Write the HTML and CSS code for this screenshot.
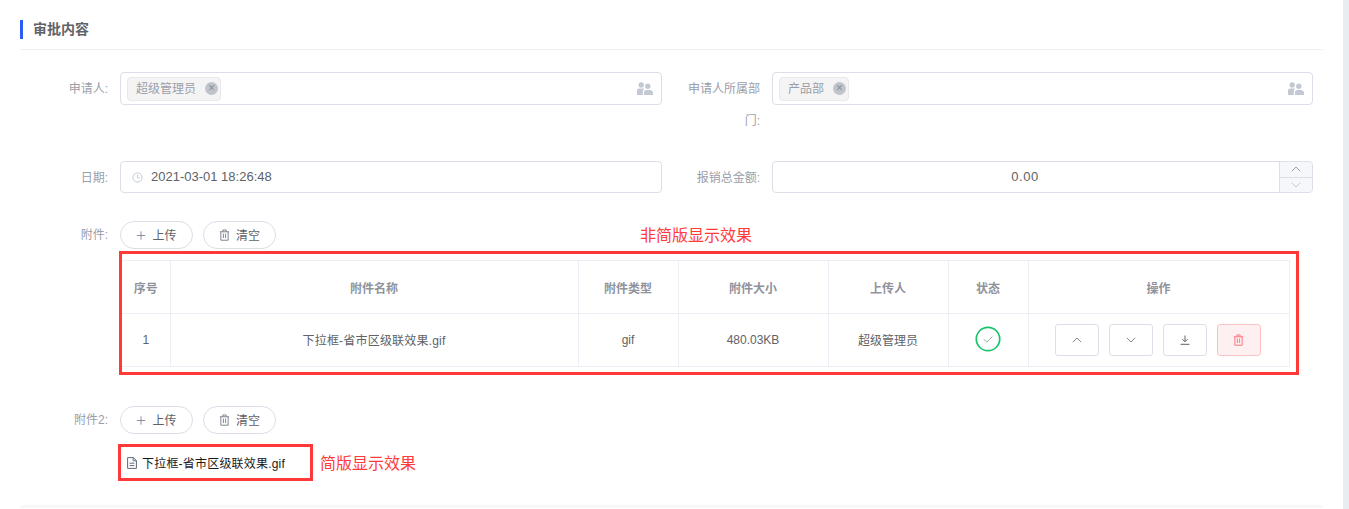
FILE: index.html
```html
<!DOCTYPE html>
<html lang="zh-CN">
<head>
<meta charset="utf-8">
<title>审批内容</title>
<link rel="stylesheet" href="styles.css">
</head>
<body>
<svg class="defs" width="0" height="0" aria-hidden="true">
  <symbol id="users" viewBox="0 0 16 14">
    <circle cx="4.2" cy="3" r="2.7" fill="currentColor"/>
    <path d="M0 13V8.6C0 7.2 1 6.4 2.4 6.4h3.4c.5 0 .9.1 1.2.3-.7.8-1.2 1.8-1.2 3V13Z" fill="currentColor"/>
    <circle cx="10.8" cy="4.2" r="2.7" fill="currentColor"/>
    <path d="M7 13v-2.6C7 9 8 8 9.4 8h3.2C14.4 8 16 9 16 10.6V13Z" fill="currentColor"/>
  </symbol>
  <symbol id="plus" viewBox="0 0 12 12">
    <path d="M6 1v10M1 6h10" fill="none" stroke="currentColor" stroke-width="1"/>
  </symbol>
  <symbol id="trash" viewBox="0 0 12 13">
    <path d="M1 3h10M2 3v9.2h8V3M4.2 3V1h3.6v2M4.8 5v4.8M7.2 5v4.8" fill="none" stroke="currentColor" stroke-width="1"/>
  </symbol>
  <symbol id="up" viewBox="0 0 10 6">
    <path d="M.8 5.2 5 1l4.2 4.2" fill="none" stroke="currentColor" stroke-width="1"/>
  </symbol>
  <symbol id="down" viewBox="0 0 10 6">
    <path d="M.8.8 5 5 9.2.8" fill="none" stroke="currentColor" stroke-width="1"/>
  </symbol>
</svg>
<div class="page">
  <main class="content">
    <h2 class="section-title">审批内容</h2>

    <div class="form-grid">
      <div class="field field-tall">
        <label class="field-label">申请人:</label>
        <div class="control tag-input">
          <span class="tag">超级管理员<span class="tag-x">×</span></span>
          <svg class="users-icon"><use href="#users"/></svg>
        </div>
      </div>
      <div class="field field-tall">
        <label class="field-label field-label-wrap">申请人所属部门:</label>
        <div class="control tag-input">
          <span class="tag">产品部<span class="tag-x">×</span></span>
          <svg class="users-icon"><use href="#users"/></svg>
        </div>
      </div>
      <div class="field">
        <label class="field-label">日期:</label>
        <div class="control date-input">
          <svg class="clock-icon" viewBox="0 0 12 12"><circle cx="6" cy="6" r="5" fill="none" stroke="currentColor"/><path d="M6 3v3.3h2.6" fill="none" stroke="currentColor"/></svg>
          <span class="date-value">2021-03-01 18:26:48</span>
        </div>
      </div>
      <div class="field">
        <label class="field-label">报销总金额:</label>
        <div class="control number-input">
          <span class="number-value">0.00</span>
          <div class="stepper">
            <span class="step step-up"><svg class="step-icon"><use href="#up"/></svg></span>
            <span class="step step-down"><svg class="step-icon"><use href="#down"/></svg></span>
          </div>
        </div>
      </div>
    </div>

    <div class="upload-row">
      <span class="upload-label">附件:</span>
      <div class="upload-body">
        <div class="btn-row">
          <button class="pill"><svg class="pill-icon"><use href="#plus"/></svg><span class="pill-text">上传</span></button>
          <button class="pill"><svg class="pill-icon pill-trash"><use href="#trash"/></svg><span class="pill-text">清空</span></button>
          <span class="note note-full">非简版显示效果</span>
        </div>
        <div class="red-box table-box">
          <table class="files">
            <colgroup>
              <col class="c1"><col class="c2"><col class="c3"><col class="c4"><col class="c5"><col class="c6"><col class="c7">
            </colgroup>
            <thead>
              <tr><th>序号</th><th>附件名称</th><th>附件类型</th><th>附件大小</th><th>上传人</th><th>状态</th><th>操作</th></tr>
            </thead>
            <tbody>
              <tr>
                <td>1</td>
                <td class="td-cjk file-name">下拉框-省市区级联效果.gif</td>
                <td>gif</td>
                <td>480.03KB</td>
                <td class="td-cjk">超级管理员</td>
                <td><svg class="status-icon" viewBox="0 0 26 26"><circle cx="13" cy="13" r="11.7" fill="none" stroke="#19c46b" stroke-width="1.7"/><path d="M8.8 13.2l3 3 5.6-5.6" fill="none" stroke="#8fb59f" stroke-width="1"/></svg></td>
                <td>
                  <div class="ops">
                    <button class="op"><svg class="op-chev"><use href="#up"/></svg></button>
                    <button class="op"><svg class="op-chev"><use href="#down"/></svg></button>
                    <button class="op"><svg class="op-dl" viewBox="0 0 10 10"><path d="M5 .5v6M2.4 4.2 5 6.8l2.6-2.6M.6 9.3h8.8" fill="none" stroke="currentColor"/></svg></button>
                    <button class="op op-del"><svg class="op-trash"><use href="#trash"/></svg></button>
                  </div>
                </td>
              </tr>
            </tbody>
          </table>
        </div>
      </div>
    </div>

    <div class="upload-row upload-row-2">
      <span class="upload-label">附件2:</span>
      <div class="upload-body">
        <div class="btn-row">
          <button class="pill"><svg class="pill-icon"><use href="#plus"/></svg><span class="pill-text">上传</span></button>
          <button class="pill"><svg class="pill-icon pill-trash"><use href="#trash"/></svg><span class="pill-text">清空</span></button>
        </div>
        <div class="simple-row">
          <div class="red-box simple-box">
            <svg class="doc-icon" viewBox="0 0 10 12"><path d="M.6.6h5.8l3 3v7.8H.6ZM6.2.6v3.2h3.2M2.6 6.2h4.8M2.6 8.6h4.8" fill="none" stroke="currentColor" stroke-width="1"/></svg>
            <span class="file-name">下拉框-省市区级联效果.gif</span>
          </div>
          <span class="note note-simple">简版显示效果</span>
        </div>
      </div>
    </div>
    <div class="bottom-line"></div>
  </main>
  <div class="side-strip"></div>
</div>
</body>
</html>
```
FILE: styles.css
```css
* { box-sizing: border-box; }
html, body { margin: 0; padding: 0; background: #fff; }
body {
  width: 1349px;
  height: 509px;
  overflow: hidden;
  font-family: "Liberation Sans", "Noto Sans CJK SC", sans-serif;
  font-size: 12px;
  color: #515a6e;
}
.defs { position: absolute; }
.page { display: flex; height: 509px; }
.content { width: 1343px; padding: 20px 20px 0; }
.side-strip { width: 6px; background: #e8edf2; }

.section-title {
  margin: 0;
  height: 30px;
  padding: 0 0 10px 13px;
  font-size: 14px;
  line-height: 19px;
  font-weight: 700;
  color: #5f6368;
  border-bottom: 1px solid #eef0f4;
  position: relative;
}
.section-title::before {
  content: "";
  position: absolute;
  left: 0;
  top: 0;
  width: 3px;
  height: 19px;
  background: #2d5cf6;
}

.form-grid {
  display: grid;
  grid-template-columns: 652px 641px;
  padding-top: 22px;
  row-gap: 0;
}
.field { display: flex; align-items: flex-start; height: 60px; }
.field-tall { height: 89px; }
.field-label {
  width: 100px;
  padding: 1px 12px 0 0;
  flex: none;
  text-align: right;
  line-height: 32px;
  color: #9a9ea8;
}
.field-label-wrap { padding-left: 16px; }
.control {
  width: 542px;
  border: 1px solid #dcdee8;
  border-radius: 4px;
  background: #fff;
  display: flex;
  align-items: center;
}
.field:nth-child(even) .control { width: 541px; }
.tag-input { height: 33px; padding: 0 6px; justify-content: space-between; }
.tag {
  display: inline-flex;
  align-items: center;
  height: 24px;
  padding: 0 2px 2px 8px;
  background: #f4f4f5;
  border: 1px solid #e9e9eb;
  border-radius: 4px;
  color: #9a9ea8;
  font-size: 12px;
}
.tag-x {
  width: 13px;
  height: 13px;
  margin: 2px 0 0 9px;
  border-radius: 50%;
  background: #c0c4cc;
  color: #8b8f99;
  font-size: 12px;
  line-height: 13px;
  text-align: center;
}
.users-icon { width: 16px; height: 14px; color: #c3c8d2; margin-right: 2px; }
.date-input { height: 32px; padding-left: 11px; gap: 8px; color: #606266; }
.date-value { font-size: 13px; padding-bottom: 2px; }
.clock-icon { width: 11px; height: 11px; color: #bcc5d6; }
.number-input { height: 32px; position: relative; justify-content: center; color: #606266; }
.number-value { padding: 0 35px 1px 0; font-size: 13px; letter-spacing: 0.5px; }
.stepper {
  position: absolute;
  right: 0;
  top: 0;
  bottom: 0;
  width: 33px;
  display: flex;
  flex-direction: column;
  border-left: 1px solid #dcdee8;
  background: #f5f7fa;
  border-radius: 0 4px 4px 0;
}
.step { flex: 1; display: flex; align-items: center; justify-content: center; }
.step-up { border-bottom: 1px solid #dcdee8; color: #9aa0ad; }
.step-down { color: #c3c8d2; }
.step-icon { width: 10px; height: 6px; }

.upload-row { display: flex; align-items: flex-start; }
.upload-label {
  width: 100px;
  flex: none;
  padding-right: 12px;
  text-align: right;
  line-height: 28px;
  color: #9a9ea8;
}
.upload-body { flex: 1; }
.btn-row { display: flex; gap: 10px; position: relative; height: 28px; }
.pill {
  width: 73px;
  height: 28px;
  padding: 0;
  border: 1px solid #dcdee8;
  border-radius: 14px;
  background: #fff;
  color: #606266;
  font: inherit;
  display: inline-flex;
  align-items: center;
  justify-content: center;
  gap: 6px;
}
.pill-text { padding-bottom: 2px; }
.pill-icon { width: 10px; height: 11px; color: #777c88; }
.pill-trash { width: 11px; height: 12px; }
.note { color: #ff3b3b; font-size: 16px; line-height: 22px; }
.note-full { position: absolute; left: 520px; top: 4px; }
.note-simple { padding-top: 2px; }

.red-box { border: 3px solid #ff3838; }
.table-box {
  width: 1180px;
  height: 124px;
  margin: 2px 0 0 -1px;
  padding: 6px 8px 6px 0;
}
.files {
  width: 1167px;
  height: 107px;
  table-layout: fixed;
  border-collapse: collapse;
  text-align: center;
}
.c1 { width: 48px; }
.c2 { width: 408px; }
.c3 { width: 100px; }
.c4 { width: 150px; }
.c5 { width: 120px; }
.c6 { width: 80px; }
.c7 { width: 261px; }
.files th, .files td {
  border: 1px solid #ebeef5;
  padding: 0;
  font-size: 12px;
}
.files tr > :first-child { border-left: 0; }
.files th { height: 53px; color: #8f939c; font-weight: 700; }
.files td { height: 53px; color: #606266; }
.files .td-cjk { padding-bottom: 2px; }
.file-name { letter-spacing: 0.2px; }
.status-icon { width: 26px; height: 26px; display: block; margin: -3px auto 0; }
.ops { display: flex; justify-content: center; gap: 10px; padding-right: 2px; }
.op {
  width: 44px;
  height: 32px;
  padding: 0;
  border: 1px solid #dcdee8;
  border-radius: 3px;
  background: #fff;
  color: #808591;
  display: flex;
  align-items: center;
  justify-content: center;
}
.op-chev { width: 10px; height: 6px; }
.op-dl { width: 10px; height: 10px; color: #606266; }
.op-del { background: #fef0f0; border-color: #fbc4c4; color: #ff6b78; }
.op-trash { width: 11px; height: 12px; }

.upload-row-2 { margin-top: 31px; }
.simple-row { display: flex; align-items: center; gap: 7px; margin: 10px 0 0 -2px; }
.simple-box {
  width: 195px;
  height: 37px;
  padding-left: 6px;
  display: flex;
  align-items: center;
  gap: 5px;
  color: #1a1a1a;
}
.doc-icon { width: 10px; height: 12px; color: #606a78; }
.bottom-line { height: 3px; margin-top: 24px; background: #f7f8fa; }
```
